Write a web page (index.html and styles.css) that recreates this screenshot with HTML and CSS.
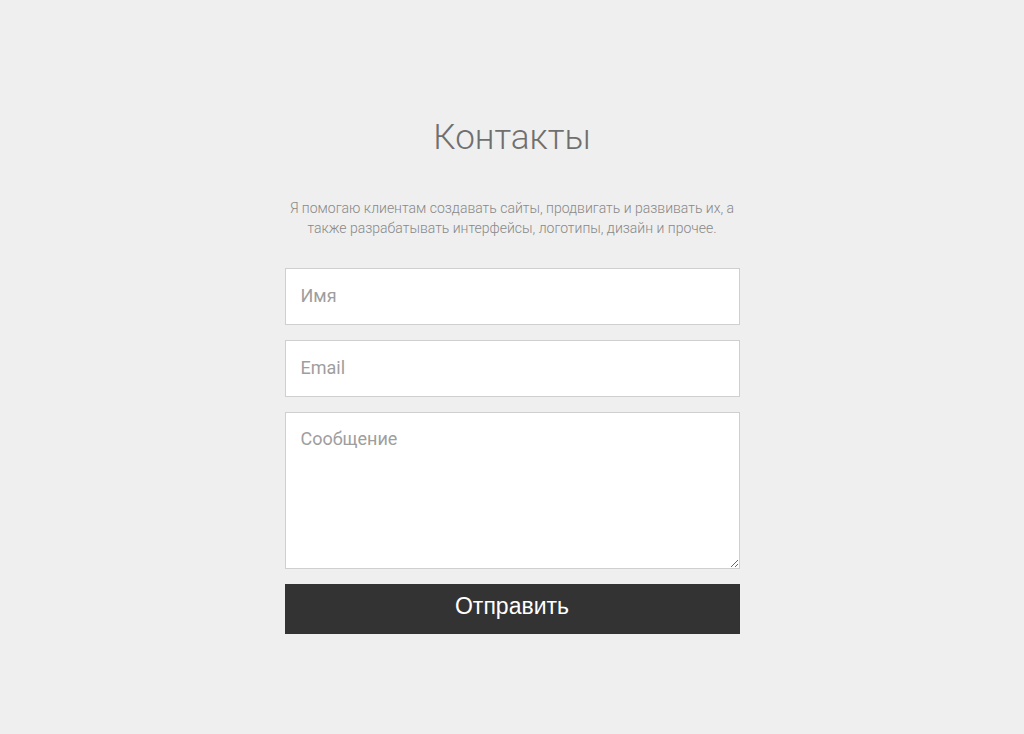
FILE: index.html
```html
<!DOCTYPE html>
<html lang="ru">
<head>
<meta charset="utf-8">
<title>Контакты</title>
<link rel="stylesheet" href="styles.css">
</head>
<body>
<section class="contacts">
  <h1 class="title">Контакты</h1>
  <p class="lead">Я помогаю клиентам создавать сайты, продвигать и развивать их, а также разрабатывать интерфейсы, логотипы, дизайн и прочее.</p>
  <form class="form">
    <input class="field" type="text" placeholder="Имя">
    <input class="field" type="email" placeholder="Email">
    <textarea class="field area" placeholder="Сообщение"></textarea>
    <button class="submit" type="button">Отправить</button>
  </form>
</section>
</body>
</html>
```
FILE: styles.css
```css
html, body {
  margin: 0;
  padding: 0;
  background: #efefef;
}
body {
  font-family: Roboto, "Liberation Sans", sans-serif;
}
.contacts {
  width: 455px;
  margin: 0 auto;
  padding-top: 116px;
  display: flex;
  flex-direction: column;
  align-items: stretch;
}
.title {
  margin: 0;
  font-weight: 300;
  font-size: 35px;
  line-height: 44px;
  color: #6f6f6f;
  text-align: center;
}
.lead {
  margin: 38px 0 0;
  font-weight: 300;
  font-size: 14px;
  line-height: 20px;
  color: #888;
  text-align: center;
}
.form {
  margin-top: 30px;
  display: flex;
  flex-direction: column;
}
.field {
  box-sizing: border-box;
  width: 100%;
  height: 57px;
  margin: 0 0 15px;
  padding: 0 15px 2px;
  border: 1px solid #cfcfcf;
  background: #fff;
  font-family: Roboto, "Liberation Sans", sans-serif;
  font-size: 18px;
  color: #333;
  outline: none;
}
.field::placeholder {
  color: #9e9e9e;
}
.area {
  height: 157px;
  padding: 15px;
  line-height: 21px;
  resize: vertical;
  display: block;
}
.submit {
  height: 50px;
  border: 0;
  background: #333;
  color: #fff;
  font-family: "Liberation Sans", Arial, sans-serif;
  font-size: 23px;
  cursor: pointer;
  padding: 0 0 6px;
}
```
